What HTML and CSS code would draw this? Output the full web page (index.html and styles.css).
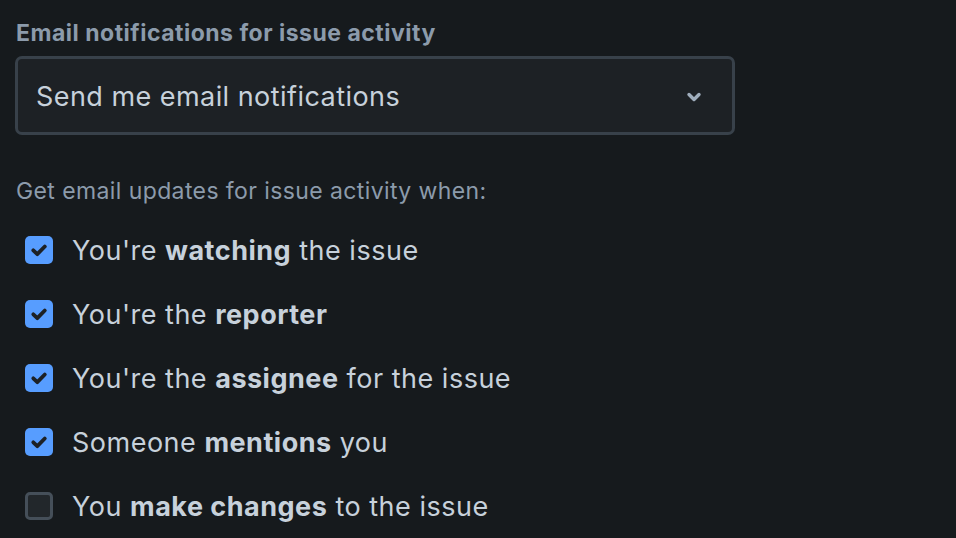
FILE: index.html
```html
<!DOCTYPE html>
<html>
<head>
<meta charset="utf-8">
<link rel="stylesheet" href="styles.css">
</head>
<body>
<div class="page">
  <div class="field-label">Email notifications for issue activity</div>
  <div class="select">
    <span class="select-value">Send me email notifications</span>
    <svg class="chevron" width="20" height="20" viewBox="0 0 20 20"><path d="M5 7.5 L10 12.5 L15 7.5" fill="none" stroke="#9fadbc" stroke-width="3.4" stroke-linecap="round" stroke-linejoin="round"/></svg>
  </div>
  <div class="hint">Get email updates for issue activity when:</div>
  <ul class="options">
    <li class="option"><span class="box checked"><svg width="28" height="28" viewBox="0 0 28 28"><path d="M8.3 14.3 L12.3 18.2 L19.8 10.5" fill="none" stroke="#1d2125" stroke-width="3.8" stroke-linecap="round" stroke-linejoin="round"/></svg></span><span class="text">You're <b>watching</b> the issue</span></li>
    <li class="option"><span class="box checked"><svg width="28" height="28" viewBox="0 0 28 28"><path d="M8.3 14.3 L12.3 18.2 L19.8 10.5" fill="none" stroke="#1d2125" stroke-width="3.8" stroke-linecap="round" stroke-linejoin="round"/></svg></span><span class="text">You're the <b>reporter</b></span></li>
    <li class="option"><span class="box checked"><svg width="28" height="28" viewBox="0 0 28 28"><path d="M8.3 14.3 L12.3 18.2 L19.8 10.5" fill="none" stroke="#1d2125" stroke-width="3.8" stroke-linecap="round" stroke-linejoin="round"/></svg></span><span class="text">You're the <b>assignee</b> for the issue</span></li>
    <li class="option"><span class="box checked"><svg width="28" height="28" viewBox="0 0 28 28"><path d="M8.3 14.3 L12.3 18.2 L19.8 10.5" fill="none" stroke="#1d2125" stroke-width="3.8" stroke-linecap="round" stroke-linejoin="round"/></svg></span><span class="text">Someone <b>mentions</b> you</span></li>
    <li class="option"><span class="box"></span><span class="text">You <b>make changes</b> to the issue</span></li>
  </ul>
</div>
</body>
</html>
```

FILE: styles.css
```css
html, body {
  margin: 0;
  padding: 0;
  background: #161a1d;
}
body {
  font-family: Inter, "Noto Sans", "Liberation Sans", sans-serif;
  width: 956px;
  height: 538px;
  overflow: hidden;
}
.page {
  padding: 19px 0 0 16px;
}
.field-label {
  font-size: 23px;
  font-weight: 700;
  color: #8c9bab;
  line-height: 28px;
  height: 28px;
  letter-spacing: 0.5px;
}
.select {
  margin-top: 9px;
  margin-left: -1px;
  box-sizing: border-box;
  width: 720px;
  height: 79px;
  border: 3px solid #38414a;
  border-radius: 7px;
  background: #1d2125;
  display: flex;
  align-items: center;
  justify-content: space-between;
  padding: 2px 28px 0 18px;
}
.select-value {
  font-size: 27px;
  color: #c7d1db;
  letter-spacing: 0.45px;
}
.chevron {
  display: block;
}
.hint {
  margin-top: 42px;
  font-size: 23px;
  color: #8c9bab;
  line-height: 28px;
  letter-spacing: 0.4px;
}
.options {
  list-style: none;
  margin: 13px 0 0 0;
  padding: 0 0 0 9px;
}
.option {
  display: flex;
  align-items: center;
  height: 64px;
}
.box {
  width: 28px;
  height: 28px;
  box-sizing: border-box;
  border-radius: 5px;
  border: 3px solid #454f59;
  background: #22272b;
  margin-right: 19px;
  flex: none;
}
.box.checked {
  background: #579dff;
  border: none;
}
.box svg {
  display: block;
}
.text {
  font-size: 27px;
  color: #c7d1db;
  letter-spacing: 0.5px;
}
.text b {
  font-weight: 700;
}
```
